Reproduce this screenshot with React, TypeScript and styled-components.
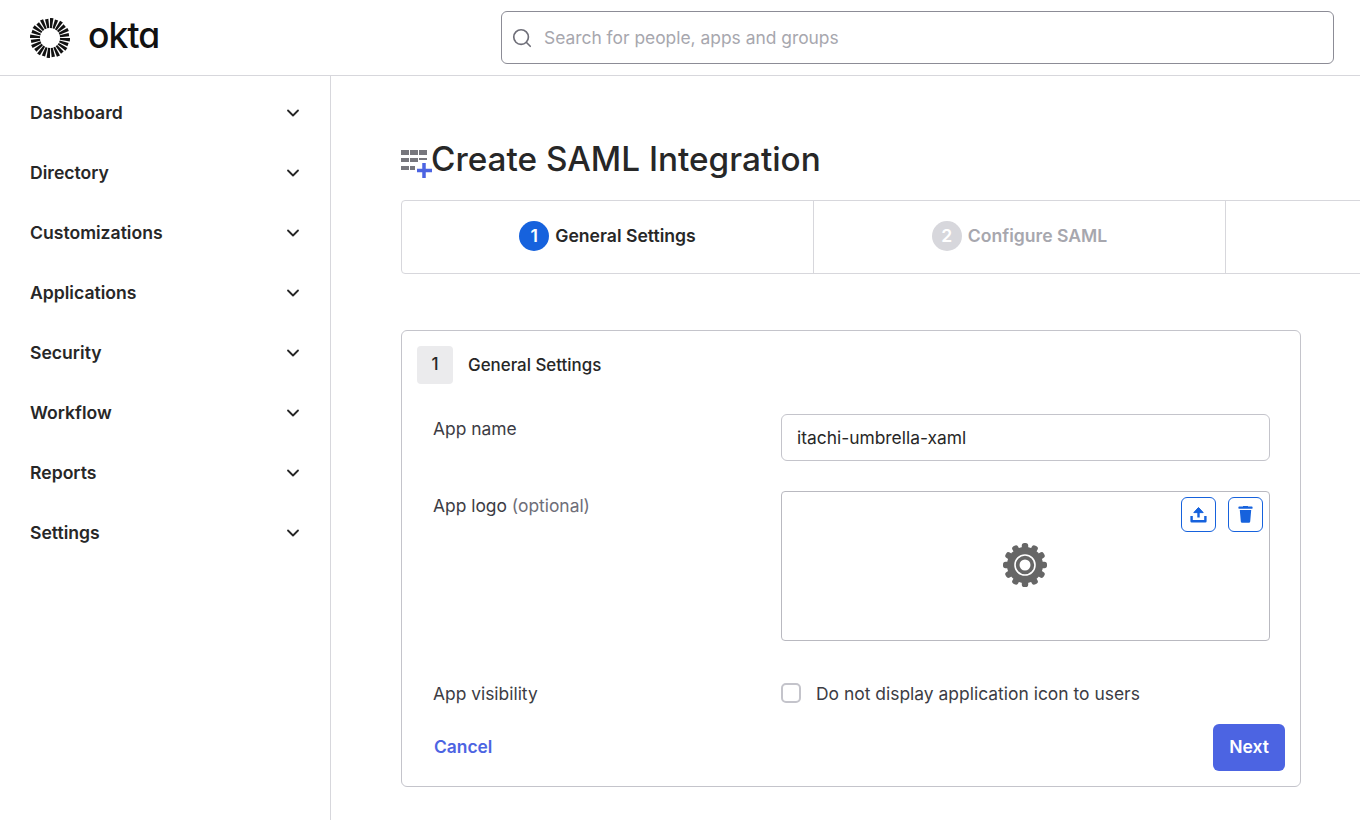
import React from "react";
import styled, {createGlobalStyle} from "styled-components";
import {ChevronDown, Search} from "lucide-react";

const GlobalStyle = createGlobalStyle`
    html, body {
        margin: 0;
        padding: 0;
        background: #fff;
        height: 100%;
        overflow: hidden;
    }
    body {
        font-family: Inter, "Liberation Sans", sans-serif;
        color: #272727;
    }
    * {
        box-sizing: border-box;
    }
`

const Page = styled.div`
    width: 1360px;
    height: 820px;
    display: flex;
    flex-direction: column;
    overflow: hidden;
`
const Header = styled.header`
    height: 76px;
    flex-shrink: 0;
    display: flex;
    align-items: flex-start;
    border-bottom: 1px solid #d7d7dc;
    padding: 11px 26px 0 30px;
`
const Logo = styled.div`
    width: 471px;
    height: 52px;
    display: flex;
    align-items: center;
    gap: 18px;
    padding-top: 1px;
`
const Wordmark = styled.span`
    font-size: 35.5px;
    font-weight: 500;
    font-feature-settings: "cv11";
    letter-spacing: -0.9px;
    color: #111;
    line-height: 1;
    position: relative;
    top: -2px;
`
const SearchBox = styled.div`
    flex: 1;
    height: 53px;
    border: 1px solid #8c8c96;
    border-radius: 6px;
    display: flex;
    align-items: center;
    gap: 11px;
    padding-left: 9px;
    color: #6e6e78;
    font-size: 17.4px;
    span {
        color: #a7a7ae;
    }
`
const Body = styled.div`
    flex: 1;
    display: flex;
    min-height: 0;
`
const Sidebar = styled.nav`
    width: 331px;
    flex-shrink: 0;
    border-right: 1px solid #d7d7dc;
    padding: 7px 27px 0 30px;
`
const NavItem = styled.div`
    height: 60px;
    display: flex;
    align-items: center;
    justify-content: space-between;
    font-size: 17.6px;
    font-weight: 600;
    color: #272727;
`
const NavLabel = styled.span`
    padding-bottom: 2px;
`
const Main = styled.main`
    flex: 1;
    min-width: 0;
    padding: 60px 0 0 70px;
    overflow: hidden;
`
const TitleRow = styled.div`
    height: 48px;
    display: flex;
    align-items: center;
    margin-bottom: 16px;
`
const TitleIcon = styled.svg`
    flex-shrink: 0;
    margin-top: 8px;
    margin-right: -1px;
`
const Title = styled.h1`
    margin: 0;
    font-size: 33.3px;
    font-weight: 500;
    line-height: 1;
    color: #272727;
`
const Steps = styled.div`
    width: 1240px;
    height: 74px;
    display: flex;
    border: 1px solid #d7d7dc;
    border-radius: 4px;
`
const Step = styled.div<{ $active?: boolean }>`
    flex: 0 0 412px;
    padding-bottom: 3px;
    display: flex;
    align-items: center;
    justify-content: center;
    gap: 6px;
    font-size: 17.6px;
    font-weight: 600;
    color: ${props => props.$active ? '#272727' : '#a7a7ae'};
    &:first-child {
        flex-basis: 411px;
    }
    & + & {
        border-left: 1px solid #d7d7dc;
    }
`
const StepNum = styled.span<{ $active?: boolean }>`
    width: 30px;
    height: 30px;
    border-radius: 50%;
    display: flex;
    align-items: center;
    justify-content: center;
    font-size: 17.6px;
    font-weight: 600;
    color: #fff;
    background: ${props => props.$active ? '#1662dd' : '#d7d7dc'};
`
const Card = styled.section`
    width: 900px;
    height: 457px;
    margin-top: 56px;
    border: 1px solid #c4c4cb;
    border-radius: 6px;
    padding: 15px;
    display: flex;
    flex-direction: column;
`
const CardHead = styled.div`
    display: flex;
    align-items: center;
    gap: 15px;
    font-size: 16.9px;
    font-weight: 500;
    height: 38px;
    margin-bottom: 30px;
`
const CardNum = styled.span`
    width: 36px;
    height: 38px;
    background: #ebebed;
    border-radius: 4px;
    display: flex;
    align-items: center;
    justify-content: center;
    padding-bottom: 2px;
    font-size: 17px;
    font-weight: 500;
`
const Row = styled.div<{ $height: number }>`
    height: ${props => props.$height}px;
    display: grid;
    grid-template-columns: 348px 489px;
    padding-left: 16px;
`
const Label = styled.div`
    font-size: 17.4px;
    line-height: 30px;
    color: #3c3c44;
    em {
        font-style: normal;
        color: #6e6e78;
    }
`
const TextInput = styled.div`
    height: 47px;
    border: 1px solid #c4c4cb;
    border-radius: 6px;
    display: flex;
    align-items: center;
    padding-left: 15px;
    font-size: 17.4px;
    color: #272727;
`
const LogoBox = styled.div`
    height: 150px;
    position: relative;
    border: 1px solid #b9b9c0;
    border-radius: 4px;
    padding: 0 2px 2px 0;
    display: flex;
    align-items: center;
    justify-content: center;
`
const LogoActions = styled.div`
    position: absolute;
    top: 5px;
    right: 6px;
    display: flex;
    gap: 12px;
`
const IconButton = styled.button`
    width: 35px;
    height: 35px;
    padding: 0;
    background: #fff;
    border: 1px solid #1662dd;
    border-radius: 6px;
    display: flex;
    align-items: center;
    justify-content: center;
`
const CheckRow = styled.div`
    display: flex;
    align-items: center;
    gap: 15px;
    height: 28px;
    font-size: 17.45px;
    color: #3c3c44;
`
const CheckBox = styled.span`
    width: 20px;
    height: 20px;
    border: 2px solid #c4c4cb;
    border-radius: 5px;
`
const Footer = styled.div`
    display: flex;
    align-items: center;
    justify-content: space-between;
    padding-left: 17px;
    height: 47px;
    margin-top: 15px;
`
const CancelLink = styled.a`
    font-size: 17.4px;
    font-weight: 600;
    padding-bottom: 2px;
    color: #4c64e2;
`
const NextButton = styled.button`
    width: 72px;
    height: 47px;
    border: 0;
    border-radius: 6px;
    padding: 0 0 2px;
    background: #4c64e2;
    color: #fff;
    font-family: inherit;
    font-size: 17.5px;
    font-weight: 600;
`

const navItems = ['Dashboard', 'Directory', 'Customizations', 'Applications', 'Security', 'Workflow', 'Reports', 'Settings'];

function Burst() {
    const rays = Array.from({length: 24}, (_, i) => i * 15 + 5);
    return <svg width="40" height="40" viewBox="0 0 40 40">
        {rays.map((a, i) => <path key={a} d={i % 2 ? "M18.300 .8h3.400l-.7 9.200h-2z" : "M18.300 0h3.400l-.7 10h-2z"} fill="#111"
                                  transform={`rotate(${a} 20 20)`}/>)}
    </svg>
}

function AddAppIcon() {
    return <TitleIcon width="31" height="28" viewBox="0 0 31 28">
        <g fill="#77777d">
            <rect x="0" y="0" width="8" height="5"/>
            <rect x="9" y="0" width="8" height="5"/>
            <rect x="18" y="0" width="8" height="5"/>
            <rect x="0" y="8" width="8" height="4"/>
            <rect x="9" y="8" width="8" height="4"/>
            <rect x="18" y="8" width="8" height="2"/>
            <rect x="0" y="16" width="8" height="4"/>
            <rect x="9" y="16" width="5" height="4"/>
        </g>
        <path d="M23 13v15M16 20.500h15" stroke="#4c64e2" strokeWidth="3.500" fill="none"/>
    </TitleIcon>
}

function UploadIcon() {
    return <svg width="17" height="17" viewBox="0 0 17 17" fill="none" stroke="#1662dd" strokeWidth="2.4">
        <path d="M8.5 11.5V2.5"/>
        <path d="M8.5 1.5 3.8 6.6h9.4z" fill="#1662dd" strokeWidth="1"/>
        <path d="M1.6 10v5.2h13.8V10" strokeLinejoin="round"/>
    </svg>
}

function TrashIcon() {
    return <svg width="15" height="17" viewBox="0 0 15 17" fill="#1662dd">
        <rect x="0.5" y="0.6" width="14" height="2.2" rx="0.6"/>
        <rect x="5" y="0" width="5" height="1.5"/>
        <path d="M1.8 4h11.4l-1 11.6q-.1 1.2-1.3 1.2H4.100q-1.200 0-1.300-1.200z"/>
    </svg>
}

function GearIcon() {
    const teeth = Array.from({length: 12}, (_, i) => i * 30);
    return <svg width="46" height="46" viewBox="0 0 46 46">
        {teeth.map(a => <rect key={a} x="19.8" y="1" width="6.400" height="7" rx="2.600" fill="#666"
                              transform={`rotate(${a} 23 23)`}/>)}
        <circle cx="23" cy="23" r="18" fill="#666"/>
        <circle cx="23" cy="23" r="10" fill="none" stroke="#fff" strokeWidth="1.600"/>
        <circle cx="23" cy="23" r="5.500" fill="#fff"/>
    </svg>
}

const App = () => {
    return <>
        <GlobalStyle/>
        <Page>
            <Header>
                <Logo>
                    <Burst/>
                    <Wordmark>okta</Wordmark>
                </Logo>
                <SearchBox>
                    <Search size={22} strokeWidth={1.8}/>
                    <span>Search for people, apps and groups</span>
                </SearchBox>
            </Header>
            <Body>
                <Sidebar>
                    {navItems.map(name => <NavItem key={name}>
                        <NavLabel>{name}</NavLabel>
                        <ChevronDown size={20} strokeWidth={2.2} color="#272727"/>
                    </NavItem>)}
                </Sidebar>
                <Main>
                    <TitleRow>
                        <AddAppIcon/>
                        <Title>Create SAML Integration</Title>
                    </TitleRow>
                    <Steps>
                        <Step $active><StepNum $active>1</StepNum>General Settings</Step>
                        <Step><StepNum>2</StepNum>Configure SAML</Step>
                        <Step/>
                    </Steps>
                    <Card>
                        <CardHead><CardNum>1</CardNum>General Settings</CardHead>
                        <Row $height={77}>
                            <Label>App name</Label>
                            <TextInput>itachi-umbrella-xaml</TextInput>
                        </Row>
                        <Row $height={188}>
                            <Label>App logo <em>(optional)</em></Label>
                            <LogoBox>
                                <GearIcon/>
                                <LogoActions>
                                    <IconButton><UploadIcon/></IconButton>
                                    <IconButton><TrashIcon/></IconButton>
                                </LogoActions>
                            </LogoBox>
                        </Row>
                        <Row $height={30}>
                            <Label>App visibility</Label>
                            <CheckRow><CheckBox/>Do not display application icon to users</CheckRow>
                        </Row>
                        <Footer>
                            <CancelLink>Cancel</CancelLink>
                            <NextButton>Next</NextButton>
                        </Footer>
                    </Card>
                </Main>
            </Body>
        </Page>
    </>
};

export default App;
